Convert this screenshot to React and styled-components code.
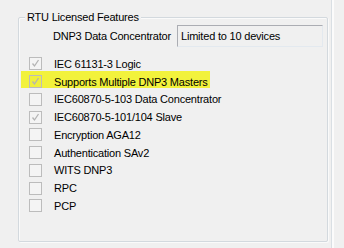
import styled, { createGlobalStyle } from "styled-components";

const GlobalStyle = createGlobalStyle`
  html, body {
    margin: 0;
    padding: 0;
    background: #f0f0f0;
  }
  body {
    font-family: "Liberation Sans", Arial, sans-serif;
    font-size: 11px;
    letter-spacing: -0.2px;
    color: #000;
  }
`;

const Page = styled.div`
  width: 332px;
  height: 248px;
  box-sizing: border-box;
  padding: 17px 0 0 18px;
  border-right: 1px solid #d9dfe4;
  box-shadow: 2px 0 0 #fbfbfb;
`;

const GroupBox = styled.div`
  width: 310px;
  height: 225px;
  box-sizing: border-box;
  border: 1px solid #d3d9de;
  border-radius: 2px;
  box-shadow: inset 1px 1px 0 #fafafa, 1px 1px 0 #fafafa;
  display: flex;
  flex-direction: column;
`;

const Title = styled.div`
  align-self: flex-start;
  margin: -7px 0 0 6px;
  padding: 0 2px;
  line-height: 13px;
  background: #f0f0f0;
`;

const HeaderRow = styled.div`
  display: flex;
  align-items: center;
  margin: 1px 0 0 34px;
`;

const Label = styled.span`
  width: 124px;
  white-space: nowrap;
`;

const TextBox = styled.div`
  width: 146px;
  height: 22px;
  box-sizing: border-box;
  display: flex;
  align-items: center;
  padding-left: 3px;
  background: #f0f0f0;
  border: 1px solid;
  border-color: #abadb3 #e3e9ef #e3e9ef #abadb3;
`;

const List = styled.div`
  display: flex;
  flex-direction: column;
  margin: 8px 0 0 10px;
`;

const Row = styled.div`
  position: relative;
  height: 17.75px;
  display: flex;
  align-items: center;
  gap: 12px;
  white-space: nowrap;

  ${({ $highlight }) =>
    $highlight &&
    `
    &::before {
      content: "";
      position: absolute;
      left: -8px;
      top: -2px;
      width: 189px;
      height: 17px;
      background: #f2f23c;
      z-index: 0;
    }
  `}
`;

const Box = styled.span`
  position: relative;
  z-index: 1;
  width: 13px;
  height: 13px;
  box-sizing: border-box;
  border: 1px solid #bcbcbc;
  background: ${({ $highlight }) => ($highlight ? "#f0f03c" : "#f4f4f4")};
  display: flex;
  align-items: center;
  justify-content: center;
`;

const Text = styled.span`
  position: relative;
  z-index: 1;
`;

const Tick = () => (
  <svg width="9" height="9" viewBox="0 0 9 9">
    <path d="M1.5 4.5 L3.5 7 L7.5 1" fill="none" stroke="#b4b4b4" strokeWidth="1.3" />
  </svg>
);

const features = [
  { label: "IEC 61131-3 Logic", checked: true },
  { label: "Supports Multiple DNP3 Masters", checked: true, highlight: true },
  { label: "IEC60870-5-103 Data Concentrator" },
  { label: "IEC60870-5-101/104 Slave", checked: true },
  { label: "Encryption AGA12" },
  { label: "Authentication SAv2" },
  { label: "WITS DNP3" },
  { label: "RPC" },
  { label: "PCP" },
];

export default function App() {
  return (
    <>
      <GlobalStyle />
      <Page>
        <GroupBox>
          <Title>RTU Licensed Features</Title>
          <HeaderRow>
            <Label>DNP3 Data Concentrator</Label>
            <TextBox>Limited to 10 devices</TextBox>
          </HeaderRow>
          <List>
            {features.map((f) => (
              <Row key={f.label} $highlight={f.highlight}>
                <Box $highlight={f.highlight}>{f.checked && <Tick />}</Box>
                <Text>{f.label}</Text>
              </Row>
            ))}
          </List>
        </GroupBox>
      </Page>
    </>
  );
}
